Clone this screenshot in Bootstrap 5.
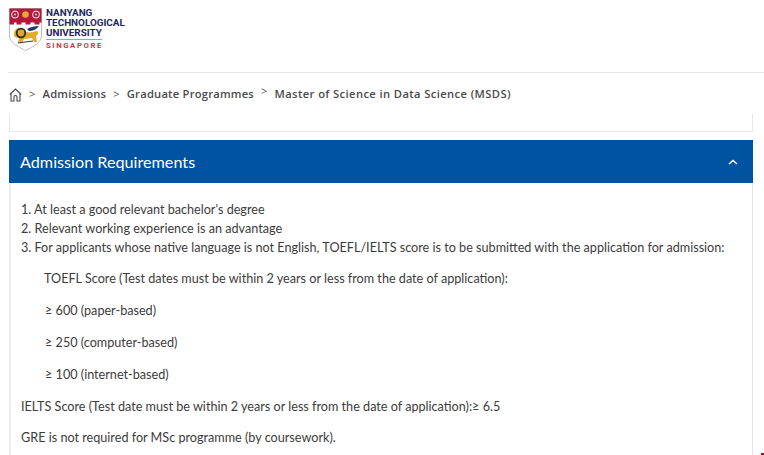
<!DOCTYPE html>
<html lang="en">
<head>
<meta charset="utf-8">
<title>MSDS Admission Requirements</title>
<link href="https://cdn.jsdelivr.net/npm/bootstrap@5.3.0/dist/css/bootstrap.min.css" rel="stylesheet">
<style>
html,body{height:455px;overflow:hidden;background:#fff}
body{font-family:Lato,"Liberation Sans",sans-serif;font-size:12.63px;color:#3c3c3c;position:relative}
.site-head{height:73px;margin-left:8px;border-bottom:1px solid #e4e6e6}
.logo-wrap{padding-top:8px;padding-left:1px;gap:4px}
.logo-text{font-family:Roboto,"Liberation Sans",sans-serif;font-weight:700;font-size:9.9px;line-height:10px;color:#1b2a5e}
.logo-sg{color:#c8374a;font-size:7.8px;letter-spacing:1.55px;border-top:1px solid #d98a94;margin-top:1px;padding-top:1px;line-height:9px;width:56px}
.crumbs{height:41px;padding:2px 0 0 9px;font-family:"Open Sans",sans-serif;font-weight:600;font-size:11.2px;color:#4a4a4a;letter-spacing:.22px}
.crumb-sep{font-weight:400;font-size:11px;margin:0 7px 0 7px;color:#555}
.crumb-up{position:relative;top:-3px}
.crumb-last{letter-spacing:.39px}
.prev-box{height:18px;margin:0 11px 0 9px;border:1px solid #e4e8ea;border-top:0}
.req-panel{margin:8px 11px 0 9px}
.req-head{height:43px;background:#0053a0;color:#fff;font-size:16.2px;padding:1px 15px 0 11px}
.req-body{border-left:2px solid #ebebeb;border-right:1px solid #e4e4e4;height:300px;padding-top:17px;padding-left:10px;line-height:19px}
.req-body p{margin:0}
.gap-line{margin-top:13px!important}
.gap-tight{margin-top:12px!important}
.ind-a{padding-left:23px}
.ind-b{padding-left:24px}
.corner-dot{position:absolute;right:0;bottom:0;width:3px;height:2px;background:#a01020}
</style>
</head>
<body>
<header class="site-head">
  <div class="logo-wrap d-flex">
    <svg width="33" height="43" viewBox="0 0 33 43" role="img" aria-label="NTU crest">
      <path d="M.5.500h32v27c0 7-8 11-16 15-8-4-16-8-16-15z" fill="#fff" stroke="#a0a0a0" stroke-width=".7"/>
      <path d="M.5.500h32v14h-2v2h-5v-2h-4v2h-5v-2h-4v2H7.500v-2H5v2H.5z" fill="#b3173b"/>
      <g fill="none" stroke="#eec3cd" stroke-width="1.200">
        <circle cx="6" cy="6.500" r="3.300"/><circle cx="27" cy="6.500" r="3.300"/>
      </g>
      <circle cx="16.500" cy="6.500" r="3.300" fill="#e7a53c"/>
      <circle cx="6" cy="6.500" r="1" fill="#eec3cd"/><circle cx="27" cy="6.500" r="1" fill="#eec3cd"/>
      <path d="M18 21c3-2 8-3 12-3-2 3-6 5-10 5z" fill="#23395f"/>
      <path d="M5 27c0-5 2-7 6-7 3 0 4 3 6 4 4 1 7 0 11-1 2 1 1 4-1 5l1 6h-3l-2-4-8 1-2 4H9l1-5c-3 0-5-1-5-3z" fill="#e3a92b"/>
      <circle cx="12" cy="25" r="4.300" fill="none" stroke="#2e2c28" stroke-width="1.800"/>
      <path d="M9 35l15-2" stroke="#3a3a3a" stroke-width="1.200"/>
    </svg>
    <div class="logo-text">NANYANG<br>TECHNOLOGICAL<br>UNIVERSITY
      <div class="logo-sg">SINGAPORE</div>
    </div>
  </div>
</header>
<nav class="crumbs d-flex align-items-center" aria-label="breadcrumb">
  <svg width="13" height="14" viewBox="0 0 13 14" fill="none" stroke="#4a4a4a" stroke-width="1.100" aria-hidden="true"><path d="M.8 6.500 6.500 1l5.700 5.500M2 5.500v7.500h3V9a1.500 1.500 0 0 1 3 0v4h3V5.500"/></svg>
  <span class="crumb-sep">&gt;</span><span>Admissions</span>
  <span class="crumb-sep">&gt;</span><span>Graduate Programmes</span>
  <span class="crumb-sep crumb-up">&gt;</span><span class="crumb-last">Master of Science in Data Science (MSDS)</span>
</nav>
<div class="prev-box"></div>
<section class="req-panel">
  <div class="req-head d-flex align-items-center justify-content-between">
    <span>Admission Requirements</span>
    <svg width="10" height="6" viewBox="0 0 10 6" fill="none" stroke="#fff" stroke-width="1.500" aria-hidden="true"><path d="M1 5l4-3.500L9 5"/></svg>
  </div>
  <div class="req-body">
    <p>1. At least a good relevant bachelor's degree</p>
    <p>2. Relevant working experience is an advantage</p>
    <p>3. For applicants whose native language is not English, TOEFL/IELTS score is to be submitted with the application for admission:</p>
    <p class="gap-tight ind-a">TOEFL Score (Test dates must be within 2 years or less from the date of application):</p>
    <p class="gap-line ind-b">≥ 600 (paper-based)</p>
    <p class="gap-line ind-b">≥ 250 (computer-based)</p>
    <p class="gap-line ind-b">≥ 100 (internet-based)</p>
    <p class="gap-line">IELTS Score (Test date must be within 2 years or less from the date of application):≥ 6.5</p>
    <p class="gap-tight">GRE is not required for MSc programme (by coursework).</p>
  </div>
</section>
<div class="corner-dot"></div>
<script src="https://cdn.jsdelivr.net/npm/bootstrap@5.3.0/dist/js/bootstrap.bundle.min.js"></script>
</body>
</html>
